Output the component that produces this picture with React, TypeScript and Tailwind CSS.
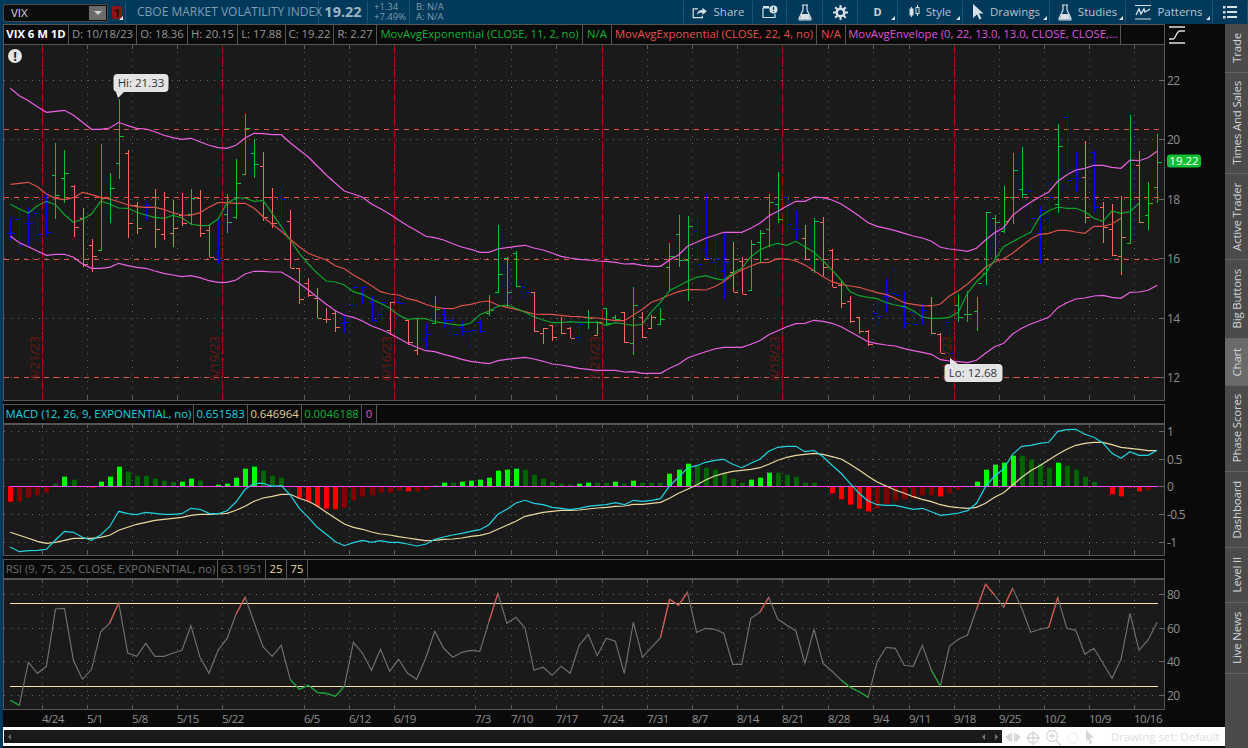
import { ReactNode } from "react";

type Bar = [number, number, number, number, string];

// all chart data is read off the screenshot at 3x: y = offset + v / 3
const bars: Bar[] = [
  [473, 543, 520, 520, "b"], [440, 578, 478, 552, "b"], [442, 560, 490, 490, "b"], [445, 543, 460, 522, "b"], [400, 527, 410, 515, "b"],
  [250, 476, 345, 405, "g"], [270, 428, 355, 340, "g"], [375, 530, 377, 502, "r"], [445, 620, 475, 613, "r"], [538, 635, 555, 587, "r"],
  [252, 572, 570, 415, "g"], [340, 488, 415, 385, "g"], [118, 356, 310, 229, "g"], [270, 534, 280, 488, "r"], [425, 522, 435, 505, "r"],
  [428, 482, 462, 435, "b"], [388, 563, 410, 508, "r"], [397, 540, 523, 410, "r"], [420, 560, 518, 505, "r"], [400, 497, 465, 490, "r"],
  [388, 495, 462, 415, "g"], [390, 532, 415, 518, "r"], [495, 590, 510, 590, "r"], [475, 608, 580, 600, "b"], [403, 520, 463, 485, "g"],
  [297, 478, 472, 368, "g"], [163, 344, 343, 205, "g"], [238, 353, 278, 313, "g"], [277, 482, 318, 470, "r"], [383, 505, 410, 490, "r"],
  [378, 505, 412, 418, "b"], [450, 625, 483, 625, "r"], [625, 733, 625, 718, "r"], [655, 710, 668, 706, "r"], [685, 775, 715, 775, "r"],
  [745, 790, 776, 778, "r"], [750, 815, 760, 800, "r"], [762, 818, 788, 787, "b"], [680, 742, 735, 682, "b"], [677, 733, 700, 680, "b"],
  [708, 785, 725, 780, "b"], [725, 790, 762, 727, "b"], [725, 825, 810, 727, "r"], [710, 775, 725, 730, "b"], [780, 855, 780, 847, "r"],
  [775, 885, 870, 775, "r"],
  [790, 868, 838, 822, "b"], [708, 790, 790, 748, "g"], [745, 808, 763, 779, "b"], [775, 828, 780, 822, "b"], [785, 825, 800, 812, "b"],
  [808, 868, 812, 810, "b"], [783, 820, 785, 812, "b"], [705, 767, 760, 750, "g"], [495, 700, 697, 643, "g"], [590, 740, 595, 697, "g"],
  [573, 680, 580, 678, "g"], [660, 715, 680, 697, "b"], [697, 815, 697, 812, "r"], [805, 851, 820, 805, "r"], [795, 842, 795, 830, "r"],
  [770, 823, 785, 818, "r"], [800, 835, 805, 835, "r"], [790, 850, 832, 792, "b"], [750, 808, 785, 775, "g"], [782, 826, 825, 787, "r"],
  [745, 798, 745, 790, "g"], [765, 782, 770, 778, "g"], [757, 848, 757, 845, "r"], [680, 885, 848, 736, "g"], [755, 833, 770, 832, "r"],
  [765, 808, 805, 770, "r"], [745, 793, 793, 777, "g"], [550, 693, 620, 587, "g"], [466, 620, 523, 600, "g"], [468, 722, 600, 497, "g"],
  [472, 612, 513, 612, "b"], [402, 596, 567, 595, "b"], [518, 650, 607, 597, "b"], [520, 718, 632, 606, "b"], [546, 697, 635, 697, "r"],
  [590, 703, 603, 703, "r"], [540, 690, 690, 553, "g"], [510, 608, 545, 520, "g"], [403, 560, 508, 425, "g"], [336, 490, 433, 478, "g"],
  [412, 515, 412, 493, "b"], [450, 540, 507, 507, "b"], [495, 600, 535, 597, "r"], [475, 640, 630, 483, "g"], [472, 648, 485, 620, "r"],
  [568, 682, 570, 680, "r"],
  [660, 743, 675, 730, "r"], [708, 788, 723, 783, "r"], [770, 822, 772, 812, "r"], [810, 858, 812, 852, "r"], [730, 800, 760, 768, "b"],
  [655, 760, 707, 707, "b"], [622, 735, 700, 705, "b"], [693, 808, 740, 788, "b"], [750, 795, 757, 792, "b"], [733, 795, 768, 750, "b"],
  [710, 822, 735, 820, "r"], [820, 880, 822, 878, "r"], [755, 885, 787, 880, "b"], [703, 785, 735, 770, "g"], [693, 785, 763, 763, "g"],
  [712, 812, 752, 668, "g"], [456, 675, 640, 456, "g"], [465, 600, 475, 487, "g"], [378, 520, 513, 482, "g"], [280, 492, 410, 330, "g"],
  [262, 415, 388, 402, "g"], [345, 502, 393, 475, "b"], [438, 608, 518, 450, "b"], [365, 515, 475, 410, "b"], [192, 458, 433, 257, "g"],
  [156, 388, 172, 360, "b"], [275, 392, 355, 355, "b"], [243, 488, 350, 470, "r"], [270, 455, 275, 440, "b"], [427, 548, 442, 500, "r"],
  [433, 587, 508, 585, "r"], [408, 645, 587, 532, "r"], [165, 550, 548, 300, "g"], [273, 490, 315, 485, "r"], [366, 510, 466, 428, "g"],
  [222, 428, 382, 307, "g"],
];

const upper = [85,107,122,140,157,154,151,166,187,208,208,204,187,197,205,207,215,226,233,238,235,245,256,263,265,256,234,220,221,224,224,248,270,291,318,345,370,393,402,412,432,446,462,480,497,512,
  529,533,540,551,561,568,577,577,567,563,559,556,564,570,579,589,594,598,600,603,604,607,612,611,616,619,619,600,585,559,547,535,526,517,517,517,505,490,468,454,438,424,424,411,413,420,
  432,449,468,488,499,505,512,520,528,534,544,562,567,570,574,565,540,518,503,466,445,427,411,396,364,345,330,325,316,316,322,325,300,302,293,274];
const lower = [528,548,560,573,586,583,583,592,612,625,625,622,610,617,622,625,633,640,645,650,647,653,662,667,667,660,642,634,634,636,636,652,670,690,712,733,752,766,772,783,798,808,820,835,850,862,
  872,875,883,890,898,904,908,911,902,898,895,892,897,904,912,915,920,925,928,931,931,931,936,935,940,940,940,925,913,894,884,875,867,862,862,862,853,842,824,812,800,791,790,781,784,790,
  800,815,830,845,851,855,858,866,872,877,883,899,903,905,908,901,880,860,850,822,805,792,782,772,743,728,717,714,708,706,712,715,697,696,691,676];
const ema22 = [373,370,367,380,402,415,419,413,397,404,412,417,425,434,440,442,442,448,458,465,466,458,442,428,428,430,430,445,470,493,513,538,560,580,590,600,617,626,645,660,677,695,702,705,716,722,
  733,741,745,746,737,733,726,723,735,742,748,755,762,763,763,766,769,770,773,774,778,782,782,765,748,727,717,705,695,689,689,690,680,665,645,630,618,608,607,596,597,603,615,632,650,665,
  673,678,682,690,698,704,715,728,733,737,738,732,708,692,672,648,622,606,596,580,558,537,523,520,511,511,516,520,499,499,492,475];
const ema11 = [433,447,459,437,424,434,464,487,478,462,424,432,444,445,457,465,472,475,466,473,492,497,496,477,430,414,414,424,421,460,500,540,580,612,640,663,666,675,695,703,718,730,745,765,778,775,
  776,785,789,793,796,789,764,753,739,735,745,757,770,780,788,788,785,787,787,787,796,788,792,796,793,755,727,692,678,664,652,647,655,660,640,625,590,570,558,550,556,544,560,577,602,630,
  660,695,707,712,716,728,735,740,752,771,775,775,772,757,700,665,640,600,560,545,530,517,470,452,441,445,445,455,475,484,453,460,455,430];

const hist = [-47,-47,-35,-28,-20,7,28,19,0,-5,13,28,58,43,31,31,22,16,12,13,22,16,0,4,7,25,52,58,46,31,25,-4,-35,-47,-62,-68,-70,-65,-44,-32,-28,-20,-20,-14,-16,-16,
  -11,3,10,10,13,16,19,25,46,49,52,49,34,22,13,7,4,7,10,10,10,13,7,16,10,10,10,37,49,67,62,55,49,37,22,10,19,25,40,40,34,28,10,10,-4,-22,
  -40,-56,-68,-76,-68,-55,-44,-40,-37,-28,-28,-31,-22,-12,-3,13,49,64,70,91,91,79,67,55,70,61,49,28,13,-2,-25,-31,-7,-16,-13,0];
const cyan = [441,455,452,451,448,420,394,397,412,421,405,380,334,341,344,337,340,343,343,341,325,328,340,341,332,306,268,250,250,259,257,285,325,352,382,403,425,437,428,421,427,422,427,427,432,438,
  433,418,411,405,400,394,389,374,343,328,309,301,310,314,322,325,329,325,319,316,314,308,314,301,304,301,296,258,232,204,197,187,181,178,193,203,190,178,154,142,139,139,155,151,170,196,
  220,250,280,303,314,316,316,322,328,325,335,346,343,339,332,310,260,228,207,163,139,136,130,127,94,89,88,103,112,129,160,175,155,166,166,151];
const cream = [397,406,415,424,430,427,421,415,415,415,412,406,391,382,373,367,361,358,355,352,346,343,343,342,340,331,319,304,294,289,283,283,295,304,318,337,355,372,382,388,396,402,405,410,414,418,
  422,421,418,417,414,409,406,400,388,376,364,349,343,337,334,331,331,330,327,324,322,319,318,313,313,310,307,295,280,268,255,240,228,220,214,211,208,203,193,181,172,166,163,160,163,170,
  177,193,210,229,246,258,270,280,290,298,305,314,320,323,325,322,310,292,278,255,232,212,197,180,163,148,136,130,127,127,134,142,145,148,152,152];
const rsi = [901,916,787,820,799,627,625,782,838,808,696,670,608,759,769,730,769,769,760,751,677,771,820,751,716,643,592,667,741,769,736,838,868,856,877,880,889,859,727,760,811,748,814,778,820,838,
  775,694,745,772,757,751,754,665,580,670,652,684,811,802,826,799,820,736,703,767,715,724,820,667,772,742,713,598,616,577,697,685,688,700,793,793,655,637,592,658,676,693,790,688,790,814,
  840,862,875,892,785,742,745,796,799,736,811,858,739,718,705,628,553,585,622,565,625,697,688,682,592,685,691,763,745,790,835,778,640,751,720,667];

const ticks = [42, 87, 132, 177, 222, 304, 349, 394, 475, 511, 556, 602, 647, 692, 737, 782, 828, 873, 909, 954, 999, 1044, 1089, 1134];
const dates = [
  [42, "4/24"], [87, "5/1"], [132, "5/8"], [177, "5/15"], [222, "5/22"], [304, "6/5"], [349, "6/12"], [394, "6/19"], [475, "7/3"], [511, "7/10"], [556, "7/17"], [602, "7/24"],
  [647, "7/31"], [692, "8/7"], [737, "8/14"], [782, "8/21"], [828, "8/28"], [873, "9/4"], [909, "9/11"], [954, "9/18"], [999, "9/25"], [1044, "10/2"], [1089, "10/9"], [1134, "10/16"],
] as [number, string][];
const expiries = [[42, "4/21/23"], [222, "5/19/23"], [394, "6/16/23"], [602, "7/21/23"], [782, "8/18/23"], [954, "9/15/23"]] as [number, string][];

const barX = (i: number) => 10.3 + i * 9.03;
const line = (ys: number[], base: number) => ys.map((v, i) => `${barX(i).toFixed(1)},${(base + v / 3).toFixed(1)}`).join(" ");
const px = (n: number) => Math.round(n) + 0.5;
const BAR_COLOR: Record<string, string> = { b: "#0000ff", g: "#0bc133", r: "#ff6a5f" };

function GridV({ top, bottom }: { top: number; bottom: number }) {
  return (
    <>
      {ticks.map((x) => (
        <g key={x}>
          <line x1={x + 0.5} x2={x + 0.5} y1={top} y2={bottom} stroke="#5c5c5c" strokeDasharray="1 6" />
          <line x1={x + 0.5} x2={x + 0.5} y1={top} y2={top + 4} stroke="#5c5c5c" />
          <line x1={x + 0.5} x2={x + 0.5} y1={bottom - 4} y2={bottom} stroke="#5c5c5c" />
        </g>
      ))}
    </>
  );
}

function GridH({ rows, labels }: { rows: number[]; labels: string[] }) {
  return (
    <>
      {rows.map((y, i) => (
        <g key={y}>
          <line x1={4} x2={1160} y1={y + 0.5} y2={y + 0.5} stroke="#666" strokeDasharray="1 6" />
          <line x1={1160} x2={1165} y1={y + 0.5} y2={y + 0.5} stroke="#666" />
          <text x={1167} y={y + 5} fontSize={12} letterSpacing={-0.7} fill="#8f8f8f">{labels[i]}</text>
        </g>
      ))}
    </>
  );
}

function PricePanel() {
  return (
    <svg className="block w-[1222px] h-[356px]" viewBox="3 45 1222 356">
      <rect x={3.5} y={44.5} width={1161} height={356} fill="#1a1a1a" stroke="#555" />
      <GridV top={45} bottom={400} />
      <GridH rows={[80, 139, 199, 258, 318, 377]} labels={["22", "20", "18", "16", "14", "12"]} />
      {[129, 197, 259, 377].map((y) => (
        <line key={y} x1={4} x2={1164} y1={y + 0.5} y2={y + 0.5} stroke={y === 197 ? "#ff4a44" : "#e0524c"} strokeDasharray="5 5" />
      ))}
      {expiries.map(([x, d]) => (
        <g key={d}>
          <line x1={x + 0.5} x2={x + 0.5} y1={45} y2={400} stroke="#a80c0c" strokeDasharray="9 3" />
          <text x={0} y={0} fontSize={12.5} fill="#6d1616" transform={`translate(${x - 3} 381) rotate(-90)`}>{d}</text>
        </g>
      ))}
      {bars.map(([top, bottom, left, right, c], i) => {
        const x = px(barX(i));
        return (
          <g key={i} stroke={BAR_COLOR[c]} shapeRendering="crispEdges">
            <line x1={x} x2={x} y1={60 + top / 3} y2={60 + bottom / 3} />
            <line x1={x - 4} x2={x} y1={px(60 + left / 3)} y2={px(60 + left / 3)} />
            <line x1={x} x2={x + 4} y1={px(60 + right / 3)} y2={px(60 + right / 3)} />
          </g>
        );
      })}
      <polyline points={line(upper, 60)} fill="none" stroke="#ea62e2" strokeWidth={1.2} />
      <polyline points={line(lower, 60)} fill="none" stroke="#ea62e2" strokeWidth={1.2} />
      <polyline points={line(ema22, 60)} fill="none" stroke="#d9524c" strokeWidth={1.2} />
      <polyline points={line(ema11, 60)} fill="none" stroke="#0fa32c" strokeWidth={1.2} />
      <circle cx={15} cy={56} r={7} fill="#e4e4e4" />
      <text x={15} y={61} fontSize={13} fontWeight={700} fill="#222" textAnchor="middle">!</text>
      <path d="M116 92 L124 92 L118 98 Z" fill="#e4e4e4" />
      <rect x={113.5} y={74} width={55} height={18} rx={4} fill="#e4e4e4" />
      <text x={141} y={87} fontSize={11.5} fill="#333" textAnchor="middle">Hi: 21.33</text>
      <path d="M950 364 L958 364 L950 358 Z" fill="#e4e4e4" />
      <rect x={944.5} y={364} width={58} height={18} rx={4} fill="#e4e4e4" />
      <text x={973} y={377} fontSize={11.5} fill="#333" textAnchor="middle">Lo: 12.68</text>
      <rect x={1167} y={154.5} width={34} height={13} rx={3} fill="#0cbf2f" />
      <text x={1184} y={165} fontSize={11.5} fill="#fff" textAnchor="middle">19.22</text>
    </svg>
  );
}

function MacdPanel() {
  return (
    <svg className="block w-[1222px] h-[132px]" viewBox="3 424 1222 132">
      <rect x={3.5} y={424.5} width={1161} height={131} fill="#1a1a1a" stroke="#555" />
      <GridV top={424} bottom={555} />
      <GridH rows={[431, 459, 486, 514, 542]} labels={["1", "0.5", "0", "-0.5", "-1"]} />
      {hist.map((v, i) => {
        if (v === 0) return null;
        const prev = i > 0 ? hist[i - 1] : 0;
        const growing = Math.abs(v) > Math.abs(prev);
        const fill = v > 0 ? (growing ? "#00ff00" : "#006400") : growing ? "#ff0000" : "#800000";
        const h = Math.abs(v) / 3;
        return <rect key={i} x={Math.round(barX(i)) - 2} y={v > 0 ? 486 - h : 486} width={5} height={h} fill={fill} />;
      })}
      <line x1={10} x2={1158} y1={486.5} y2={486.5} stroke="#ff45ff" />
      <polyline points={line(cream, 400)} fill="none" stroke="#e8d9a0" strokeWidth={1.2} />
      <polyline points={line(cyan, 400)} fill="none" stroke="#1fd3e0" strokeWidth={1.2} />
    </svg>
  );
}

function RsiPanel() {
  return (
    <svg className="block w-[1222px] h-[131px]" viewBox="3 579 1222 131">
      <rect x={3.5} y={579.5} width={1161} height={130} fill="#1a1a1a" stroke="#555" />
      <GridV top={579} bottom={709} />
      <GridH rows={[594, 628, 661, 695]} labels={["80", "60", "40", "20"]} />
      <line x1={10} x2={1158} y1={603.5} y2={603.5} stroke="#f3e3a8" />
      <line x1={10} x2={1158} y1={686.5} y2={686.5} stroke="#f3e3a8" />
      <polyline points={line(rsi, 400)} fill="none" stroke="#6e6e6e" strokeWidth={1.2} />
      {rsi.map((v, i) => {
        if (i === 0 || (v > 620 && v < 856)) return null;
        return (
          <line
            key={i}
            x1={barX(i - 1)}
            y1={400 + rsi[i - 1] / 3}
            x2={barX(i)}
            y2={400 + v / 3}
            stroke={v <= 620 ? "#d9524c" : "#0fa32c"}
            strokeWidth={1.2}
          />
        );
      })}
    </svg>
  );
}

function Cell({ w, color, bold, children }: { w?: string; color: string; bold?: boolean; children: ReactNode }) {
  return (
    <div className={`${w ?? ""} ${color} ${bold ? "font-bold" : ""} flex items-center justify-center border-r border-[#555] h-full shrink-0 whitespace-nowrap`}>
      {children}
    </div>
  );
}

function Corner() {
  return <span className="absolute right-[2px] bottom-[3px] w-0 h-0 border-l-[4px] border-l-transparent border-b-[4px] border-b-[#dfe8ee]" />;
}

function ToolItem({ w, label, corner, children }: { w: string; label?: string; corner?: boolean; children?: ReactNode }) {
  return (
    <div className={`${w} relative h-[22px] flex items-center justify-center gap-[6px] border-r border-[#1b5475] text-[11.5px] text-[#b4c6d2] shrink-0`}>
      {children}
      {label && <span>{label}</span>}
      {corner && <Corner />}
    </div>
  );
}

function Toolbar() {
  return (
    <div className="h-[24px] flex items-center shrink-0 pl-[3px]">
      <div className="w-[105px] h-[18px] mt-[1px] bg-[#0d0d0d] border border-[#4a4a4a] rounded-[2px] flex items-center justify-between pl-[7px] text-[11.5px] text-[#d8d8d8] shrink-0">
        <span>VIX</span>
        <span className="w-[17px] h-[14px] mr-[1px] bg-[#6b6b6b] flex items-center justify-center">
          <span className="w-0 h-0 border-x-[4px] border-x-transparent border-t-[4px] border-t-[#d0d0d0]" />
        </span>
      </div>
      <div className="relative w-[14px] h-[22px] ml-[4px] border-r border-[#1b5475] shrink-0">
        <span className="absolute left-0 top-[5px] w-[10px] h-[13px] bg-[#8f1414] rounded-[2px] text-[11px] leading-[13px] text-center text-[#260a0a] font-bold">1</span>
        <Corner />
      </div>
      <div className="w-[193px] pl-[11px] h-[22px] flex items-center border-r border-[#1b5475] text-[12px] text-[#7f9db0] whitespace-nowrap shrink-0">CBOE MARKET VOLATILITY INDEX</div>
      <div className="w-[49px] h-[22px] flex items-center justify-center border-r border-[#1b5475] text-[14.5px] font-bold text-[#9db4c2] shrink-0">19.22</div>
      <div className="w-[42px] h-[22px] pl-[6px] flex flex-col justify-center border-r border-[#1b5475] text-[9.5px] leading-[10px] text-[#7f9db0] shrink-0">
        <span>+1.34</span>
        <span>+7.49%</span>
      </div>
      <div className="w-[273px] h-[22px] pl-[6px] flex flex-col justify-center text-[9.5px] leading-[10px] text-[#7f9db0] shrink-0">
        <span>B: N/A</span>
        <span>A: N/A</span>
      </div>
      <div className="w-[1px] h-[22px] bg-[#1b5475] shrink-0" />
      <ToolItem w="w-[69px]" label="Share">
        <svg width="16" height="13" viewBox="0 0 20 16" fill="none" stroke="#d6e0e6" strokeWidth="1.5">
          <path d="M13 12v2.5H1.5V3.5h6" />
          <path d="M6 11c.5-4 3-6 7-6V2l5.5 4.5L13 11V8c-3 0-5.500 1-7 3z" fill="#d6e0e6" stroke="none" />
        </svg>
      </ToolItem>
      <ToolItem w="w-[34px]">
        <svg width="16" height="14" viewBox="0 0 16 14" fill="none" stroke="#d6e0e6" strokeWidth="1.2">
          <path d="M1 3h8M1 3v9.500h12V9" />
          <rect x="1" y="1" width="6" height="2" fill="#d6e0e6" stroke="none" />
          <circle cx="11.500" cy="4.500" r="4" fill="#d6e0e6" stroke="none" />
          <path d="M11.500 2v3M11.500 6v1" stroke="#00395a" />
        </svg>
      </ToolItem>
      <ToolItem w="w-[36px]">
        <svg width="14" height="17" viewBox="0 0 14 17" fill="none" stroke="#d6e0e6" strokeWidth="1.2">
          <path d="M4 1h6M5 1v5L1 14.500c-.3.800.2 1.500 1 1.500h10c.8 0 1.300-.7 1-1.500L9 6V1" />
          <path d="M3.500 10h7l2 5.500H1.500z" fill="#d6e0e6" stroke="none" />
        </svg>
      </ToolItem>
      <ToolItem w="w-[35px]">
        <svg width="15" height="15" viewBox="0 0 15 15">
          <g stroke="#d6e0e6" strokeWidth="2">
            <path d="M7.500 0v15M0 7.500h15M2.200 2.200l10.600 10.600M12.800 2.200L2.200 12.800" />
          </g>
          <circle cx="7.500" cy="7.500" r="5" fill="#d6e0e6" />
          <circle cx="7.500" cy="7.500" r="2.500" fill="#00395a" />
        </svg>
      </ToolItem>
      <ToolItem w="w-[40px]" corner>
        <span className="font-bold text-[11px] text-[#c8d6de]">D</span>
      </ToolItem>
      <ToolItem w="w-[65px]" label="Style" corner>
        <svg width="11" height="16" viewBox="0 0 11 16" fill="#d6e0e6" stroke="#d6e0e6">
          <path d="M2.500 3v10M8.500 1v11" />
          <rect x="1" y="5" width="3" height="6" />
          <rect x="7" y="3.500" width="3" height="6" fill="#00395a" />
        </svg>
      </ToolItem>
      <ToolItem w="w-[87px]" label="Drawings" corner>
        <svg width="12" height="16" viewBox="0 0 12 16" fill="#d6e0e6">
          <path d="M1 0l10.500 9.500H7l2.500 5-2 1L5 10.500 1 14z" />
        </svg>
      </ToolItem>
      <ToolItem w="w-[76px]" label="Studies" corner>
        <svg width="14" height="17" viewBox="0 0 14 17" fill="none" stroke="#d6e0e6" strokeWidth="1.2">
          <path d="M4 1h6M5 1v5L1 14.500c-.3.800.2 1.500 1 1.500h10c.8 0 1.300-.7 1-1.500L9 6V1" />
          <path d="M3.500 10h7l2 5.500H1.500z" fill="#d6e0e6" stroke="none" />
        </svg>
      </ToolItem>
      <ToolItem w="w-[87px]" label="Patterns" corner>
        <svg width="16" height="16" viewBox="0 0 16 16" fill="none" stroke="#d6e0e6" strokeWidth="1.2">
          <path d="M0 1.500h16M0 15h16" />
          <path d="M1 11l3-6 2 5 3-5 1 3 5-3" strokeWidth="1.400" />
        </svg>
      </ToolItem>
      <ToolItem w="w-[35px]">
        <svg width="14" height="13" viewBox="0 0 14 13" fill="#d6e0e6">
          <path d="M0 0h2.500v2.500H0zM4 0h10v2H4zM0 5h2.500v2.500H0zM4 5h10v2H4zM0 10h2.500v2.500H0zM4 10h10v2H4z" />
        </svg>
      </ToolItem>
    </div>
  );
}

function PriceLegend() {
  return (
    <div className="h-[21px] flex items-center bg-[#0a0a0a] text-[11.3px] text-[#969696]">
      <div className="w-[1162px] h-full flex border border-[#555] shrink-0">
        <Cell w="w-[65px]" color="text-white" bold>VIX 6 M 1D</Cell>
        <Cell w="w-[68px]" color="text-[#969696]">D: 10/18/23</Cell>
        <Cell w="w-[51px]" color="text-[#969696]">O: 18.36</Cell>
        <Cell w="w-[50px]" color="text-[#969696]">H: 20.15</Cell>
        <Cell w="w-[48px]" color="text-[#969696]">L: 17.88</Cell>
        <Cell w="w-[48px]" color="text-[#969696]">C: 19.22</Cell>
        <Cell w="w-[43px]" color="text-[#969696]">R: 2.27</Cell>
        <Cell w="w-[206px]" color="text-[#0fb52f]">MovAvgExponential (CLOSE, 11, 2, no)</Cell>
        <Cell w="w-[29px]" color="text-[#0fb52f]">N/A</Cell>
        <Cell w="w-[205px]" color="text-[#e5524c]">MovAvgExponential (CLOSE, 22, 4, no)</Cell>
        <Cell w="w-[29px]" color="text-[#e5524c]">N/A</Cell>
        <Cell w="w-[275px]" color="text-[#dd55dd]">MovAvgEnvelope (0, 22, 13.0, 13.0, CLOSE, CLOSE,...</Cell>
      </div>
      <svg className="ml-[4px]" width="17" height="18" viewBox="0 0 17 18" fill="none" stroke="#e0e0e0" strokeWidth="1.300">
        <path d="M0 1h16M0 17h16" />
        <path d="M0 13h4c3 0 3-8 7-8h5" />
      </svg>
    </div>
  );
}

function MacdLegend() {
  return (
    <div className="h-[20px] flex bg-[#0a0a0a] text-[11.3px]">
      <div className="w-[1162px] h-full flex border border-[#555]">
        <Cell w="w-[190px]" color="text-[#1fd3e0]">MACD (12, 26, 9, EXPONENTIAL, no)</Cell>
        <Cell w="w-[54px]" color="text-[#1fd3e0]">0.651583</Cell>
        <Cell w="w-[54px]" color="text-[#e0d29a]">0.646964</Cell>
        <Cell w="w-[60px]" color="text-[#0fb52f]">0.0046188</Cell>
        <Cell w="w-[15px]" color="text-[#dd55dd]">0</Cell>
      </div>
    </div>
  );
}

function RsiLegend() {
  return (
    <div className="h-[20px] flex bg-[#0a0a0a] text-[11.3px]">
      <div className="w-[1162px] h-full flex border border-[#555]">
        <Cell w="w-[214px]" color="text-[#6e6e6e]">RSI (9, 75, 25, CLOSE, EXPONENTIAL, no)</Cell>
        <Cell w="w-[48px]" color="text-[#6e6e6e]">63.1951</Cell>
        <Cell w="w-[21px]" color="text-[#e8d9a0]">25</Cell>
        <Cell w="w-[21px]" color="text-[#e8d9a0]">75</Cell>
      </div>
    </div>
  );
}

function DateAxis() {
  return (
    <svg className="block w-[1222px] h-[17px]" viewBox="3 710 1222 17">
      {dates.map(([x, d]) => (
        <text key={d} x={x} y={723} fontSize={11.5} letterSpacing={-0.5} fill="#8f8f8f">{d}</text>
      ))}
    </svg>
  );
}

function BottomBar() {
  return (
    <div className="h-[19px] bg-white flex items-start pt-[3px] text-[#dcdcdc]">
      <div className="w-[998px] h-[13px] bg-[#1a1a1a] flex items-center justify-between px-[4px] ml-[1px] shrink-0">
        <span className="w-0 h-0 border-y-[3px] border-y-transparent border-r-[3px] border-r-[#666]" />
        <span className="flex items-center gap-[10px]">
          <span className="w-0 h-0 border-y-[3px] border-y-transparent border-r-[3px] border-r-[#777]" />
          <span className="w-0 h-0 border-y-[3px] border-y-transparent border-l-[3px] border-l-[#777]" />
        </span>
      </div>
      <svg className="ml-[3px] shrink-0" width="100" height="16" viewBox="0 0 100 16" fill="none" stroke="#d6d6d6" strokeWidth="1.300">
        <path d="M1 7l4-3v7zM15 7l-4-3v7z" fill="#d6d6d6" />
        <path d="M6.500 3v8M9.500 3v8" />
        <circle cx="28" cy="8" r="5" />
        <path d="M28 1v14M21 8h14" />
        <circle cx="47" cy="6" r="5.500" />
        <path d="M44 6h6M47 3v6M51 10l5 6" />
        <circle cx="68" cy="8" r="5" stroke="#efefef" />
        <path d="M81 0l8 8h-4l2 5-2 1-2-5-2 3z" fill="#d6d6d6" stroke="none" />
      </svg>
      <span className="ml-[6px] text-[11.5px] leading-[14px] text-[#dedede] whitespace-nowrap">Drawing set: Default</span>
    </div>
  );
}

const tabs = [
  { name: "Trade", h: "h-[49px]" },
  { name: "Times And Sales", h: "h-[101px]" },
  { name: "Active Trader", h: "h-[86px]" },
  { name: "Big Buttons", h: "h-[79px]" },
  { name: "Chart", h: "h-[47px]", active: true },
  { name: "Phase Scores", h: "h-[86px]" },
  { name: "Dashboard", h: "h-[76px]" },
  { name: "Level II", h: "h-[55px]" },
  { name: "Live News", h: "h-[71px]" },
];

function SideTabs() {
  return (
    <div className="w-[23px] bg-[#4b4b4b] flex flex-col shrink-0">
      {tabs.map((t) => (
        <div
          key={t.name}
          className={`${t.h} ${t.active ? "bg-[#6a6a6a]" : "bg-[#4b4b4b]"} border-b border-[#626262] flex items-center justify-center text-[11.5px] tracking-[-0.2px] text-[#d4d4d4]`}
        >
          <span className="[writing-mode:vertical-rl] rotate-180 whitespace-nowrap">{t.name}</span>
        </div>
      ))}
    </div>
  );
}

export default function App() {
  return (
    <div className="w-[1248px] h-[748px] bg-[#00395a] flex flex-col overflow-hidden font-['Open_Sans',sans-serif]">
      <Toolbar />
      <div className="flex flex-1 min-h-0">
        <div className="w-[1222px] ml-[3px] bg-[#0a0a0a] flex flex-col shrink-0">
          <PriceLegend />
          <PricePanel />
          <div className="h-[3px]" />
          <MacdLegend />
          <MacdPanel />
          <div className="h-[3px]" />
          <RsiLegend />
          <RsiPanel />
          <DateAxis />
          <BottomBar />
        </div>
        <SideTabs />
      </div>
    </div>
  );
}
